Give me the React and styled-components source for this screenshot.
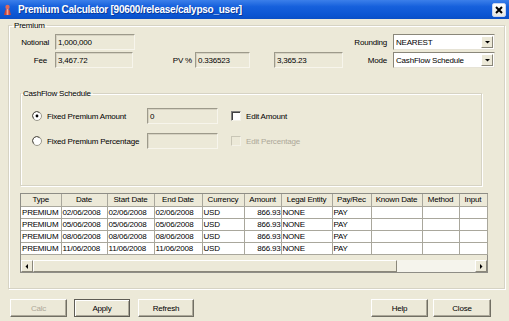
import styled, { createGlobalStyle } from "styled-components";

const columns = [
  { title: "Type", width: 40 },
  { title: "Date", width: 46 },
  { title: "Start Date", width: 47 },
  { title: "End Date", width: 48 },
  { title: "Currency", width: 42 },
  { title: "Amount", width: 37, align: "right" },
  { title: "Legal Entity", width: 51 },
  { title: "Pay/Rec", width: 39 },
  { title: "Known Date", width: 51 },
  { title: "Method", width: 37 },
  { title: "Input", width: 28 },
];

const dates = ["02/06/2008", "05/06/2008", "08/06/2008", "11/06/2008"];
const flows = dates.map((d) => ["PREMIUM", d, d, d, "USD", "866.93", "NONE", "PAY", "", "", ""]);

const GlobalStyle = createGlobalStyle`
  html, body { margin: 0; padding: 0; background: #ECE9D8; }
  body {
    font-family: "Liberation Sans", Arial, sans-serif;
    font-size: 8px;
    letter-spacing: -0.2px;
    color: #000;
  }
  * { box-sizing: border-box; }
`;

const Window = styled.div`
  width: 509px;
  height: 321px;
  background: #ECE9D8;
  display: flex;
  flex-direction: column;
  overflow: hidden;
`;

const TitleBar = styled.div`
  height: 19px;
  flex: none;
  display: flex;
  align-items: center;
  padding: 0 3px 0 3px;
  background: linear-gradient(#3B7FEA, #1660DC 35%, #0B55D2 80%, #0A4FC6);
  color: #fff;
  font-weight: bold;
  font-size: 10px;
  letter-spacing: -0.25px;
`;

const TitleText = styled.span`
  margin-left: 6px;
  flex: 1;
  text-shadow: 1px 1px 0 #0A3A9A;
`;

const CloseBox = styled.div`
  width: 14px;
  height: 14px;
  background: linear-gradient(#FFFFFF, #E6E6E0);
  border: 1px solid #C8D4F0;
  border-radius: 2px;
  display: flex;
  align-items: center;
  justify-content: center;
`;

const Body = styled.div`
  flex: 1;
  padding: 1px 4px 0 8px;
  display: flex;
  flex-direction: column;
`;

const Group = styled.fieldset`
  margin: ${(p) => p.$margin || "0"};
  width: ${(p) => p.$width || "auto"};
  padding: ${(p) => p.$padding || "0"};
  border: 1px solid #D6D3C4;
  box-shadow: inset 1px 1px 0 #FFFFFF, 1px 1px 0 #FFFFFF;
  min-width: 0;
`;

const Legend = styled.legend`
  font-size: 8px;
  line-height: 11px;
  padding: 0 2px;
  margin-left: ${(p) => p.$offset || 0}px;
`;

const TopGrid = styled.div`
  margin: 3px 0 0 0;
  display: grid;
  grid-template-columns: 46px 80px 60px 55px 24px 69px 50px 102px;
  grid-auto-rows: 16px;
  row-gap: 2px;
  align-items: center;
`;

const FieldLabel = styled.span`
  text-align: right;
  padding-right: ${(p) => p.$pad ?? 6}px;
  grid-column: ${(p) => p.$col};
`;

const ReadOnly = styled.div`
  grid-column: ${(p) => p.$col || "auto"};
  height: 16px;
  margin-right: ${(p) => p.$mr || 0}px;
  background: #ECE9D8;
  border: 1px solid;
  border-color: #9D9A8B #F7F5EC #F7F5EC #9D9A8B;
  box-shadow: inset 1px 1px 0 #D6D2C2;
  padding: 0 2px;
  display: flex;
  align-items: center;
`;

const Select = styled.div`
  grid-column: 8;
  height: 16px;
  background: #fff;
  border: 1px solid;
  border-color: #8A877A #E6E3D6 #E6E3D6 #8A877A;
  display: flex;
  align-items: center;
  padding-left: 2px;
`;

const SelectValue = styled.span`
  flex: 1;
`;

const DropButton = styled.div`
  width: 12px;
  height: 12px;
  margin-right: 1px;
  background: #ECE9D8;
  border: 1px solid;
  border-color: #FFFFFF #8A877A #8A877A #FFFFFF;
  display: flex;
  align-items: center;
  justify-content: center;
`;

const OptionGrid = styled.div`
  margin: 9px 0 0 11px;
  display: grid;
  grid-template-columns: 115px 71px 13px auto;
  grid-auto-rows: 16px;
  row-gap: 9px;
  align-items: center;
`;

const Choice = styled.label`
  display: flex;
  align-items: center;
  gap: 5px;
  white-space: nowrap;
  color: ${(p) => (p.$disabled ? "#ACA899" : "#000")};
`;

const CheckBox = styled.span`
  width: 10px;
  height: 10px;
  flex: none;
  background: ${(p) => (p.$disabled ? "#ECE9D8" : "#fff")};
  border: 1px solid;
  border-color: ${(p) =>
    p.$disabled ? "#C9C6B6 #F4F2E8 #F4F2E8 #C9C6B6" : "#808080 #F4F2E8 #F4F2E8 #808080"};
  box-shadow: ${(p) => (p.$disabled ? "none" : "inset 1px 1px 0 #404040")};
`;

const TablePanel = styled.div`
  margin: 7px 0 0 11px;
  width: 468px;
  height: 80px;
  border: 1px solid #8E8D86;
  display: flex;
  flex-direction: column;
`;

const TableArea = styled.div`
  flex: 1;
  background: #ECE9D8;
`;

const Grid = styled.table`
  border-collapse: collapse;
  table-layout: fixed;
  width: 466px;
`;

const HeadCell = styled.th`
  height: 12px;
  padding: 0;
  font-weight: normal;
  text-align: center;
  background: #ECE9D8;
  border-right: 1px solid #A9A79C;
  border-bottom: 1px solid #A9A79C;
  white-space: nowrap;
  overflow: hidden;
  line-height: 11px;
`;

const Cell = styled.td`
  height: 12px;
  padding: 0 0 0 1px;
  background: #fff;
  text-align: ${(p) => p.$align || "left"};
  border-right: 1px solid #A9A79C;
  border-bottom: 1px solid #A9A79C;
  white-space: nowrap;
  overflow: hidden;
  line-height: 11px;
`;

const ScrollBar = styled.div`
  height: 12px;
  flex: none;
  display: flex;
  background: #F5F4EC;
`;

const ScrollArrow = styled.div`
  width: 12px;
  height: 12px;
  background: #ECE9D8;
  border: 1px solid;
  border-color: #FFFFFF #8A877A #8A877A #FFFFFF;
  display: flex;
  align-items: center;
  justify-content: center;
`;

const ScrollThumb = styled.div`
  width: 364px;
  height: 12px;
  background: #ECE9D8;
  border: 1px solid;
  border-color: #FFFFFF #8A877A #8A877A #FFFFFF;
`;

const ScrollTrack = styled.div`
  flex: 1;
`;

const ButtonRow = styled.div`
  margin-top: 10px;
  padding: 0 14px 0 2px;
  display: flex;
  align-items: center;
`;

const Button = styled.div`
  width: ${(p) => p.$w || 56}px;
  height: 18px;
  margin-left: ${(p) => p.$ml || 0}px;
  background: #ECE9D8;
  border: 1px solid;
  border-color: ${(p) => (p.$default ? "#5E5C55" : "#FFFFFF #716F64 #716F64 #FFFFFF")};
  box-shadow: ${(p) =>
    p.$default
      ? "inset 1px 1px 0 #FFFFFF, inset -1px -1px 0 #ACA899"
      : "inset -1px -1px 0 #ACA899"};
  color: ${(p) => (p.$disabled ? "#ACA899" : "#000")};
  display: flex;
  align-items: center;
  justify-content: center;
`;

const Spacer = styled.div`
  flex: 1;
`;

function AppIcon() {
  return (
    <svg width="9" height="12" viewBox="0 0 9 12">
      <ellipse cx="4.5" cy="3" rx="2.2" ry="2.2" fill="#E06A5A" />
      <path d="M1 11 L2.5 5.5 H6.5 L8 11 Z" fill="#C8463A" />
      <rect x="3.6" y="5" width="1.8" height="6" fill="#F3A08E" />
    </svg>
  );
}

function Radio({ checked }) {
  return (
    <svg width="10" height="10" viewBox="0 0 10 10" style={{ flex: "none" }}>
      <circle cx="5" cy="5" r="4.5" fill="#fff" stroke="#9A978A" />
      <path d="M1.8 7.6 A4 4 0 0 1 7.6 1.8" fill="none" stroke="#5A5850" />
      {checked && <circle cx="5" cy="5" r="1.4" fill="#000" />}
    </svg>
  );
}

function Arrow({ dir }) {
  const d = {
    down: "M1 2 H6 L3.5 4.5 Z",
    left: "M4 1 V6 L1.5 3.5 Z",
    right: "M2 1 V6 L4.5 3.5 Z",
  }[dir];
  return (
    <svg width="7" height="7" viewBox="0 0 7 7">
      <path d={d} fill="#000" />
    </svg>
  );
}

export default function App() {
  return (
    <>
      <GlobalStyle />
      <Window>
        <TitleBar>
          <AppIcon />
          <TitleText>Premium Calculator [90600/release/calypso_user]</TitleText>
          <CloseBox>
            <svg width="8" height="8" viewBox="0 0 8 8">
              <path d="M1 1 L7 7 M7 1 L1 7" stroke="#000" strokeWidth="2" />
            </svg>
          </CloseBox>
        </TitleBar>

        <Body>
          <Group $padding="0 0 15px 0">
            <Legend $offset={3}>Premium</Legend>
            <TopGrid>
              <FieldLabel $col={1}>Notional</FieldLabel>
              <ReadOnly $col={2}>1,000,000</ReadOnly>
              <FieldLabel $col={7}>Rounding</FieldLabel>
              <Select>
                <SelectValue>NEAREST</SelectValue>
                <DropButton><Arrow dir="down" /></DropButton>
              </Select>

              <FieldLabel $col={1} $pad={8}>Fee</FieldLabel>
              <ReadOnly $col={2} $mr={2}>3,467.72</ReadOnly>
              <FieldLabel $col={3} $pad={3}>PV %</FieldLabel>
              <ReadOnly $col={4}>0.336523</ReadOnly>
              <ReadOnly $col={6}>3,365.23</ReadOnly>
              <FieldLabel $col={7}>Mode</FieldLabel>
              <Select>
                <SelectValue>CashFlow Schedule</SelectValue>
                <DropButton><Arrow dir="down" /></DropButton>
              </Select>
            </TopGrid>

            <Group $margin="20px 0 0 11px" $width="462px" $padding="0 0 36px 0">
              <Legend>CashFlow Schedule</Legend>
              <OptionGrid>
                <Choice><Radio checked />Fixed Premium Amount</Choice>
                <ReadOnly>0</ReadOnly>
                <span />
                <Choice><CheckBox />Edit Amount</Choice>

                <Choice><Radio />Fixed Premium Percentage</Choice>
                <ReadOnly />
                <span />
                <Choice $disabled><CheckBox $disabled />Edit Percentage</Choice>
              </OptionGrid>
            </Group>

            <TablePanel>
              <TableArea>
                <Grid>
                  <colgroup>
                    {columns.map((c) => (
                      <col key={c.title} style={{ width: c.width }} />
                    ))}
                  </colgroup>
                  <thead>
                    <tr>
                      {columns.map((c) => (
                        <HeadCell key={c.title}>{c.title}</HeadCell>
                      ))}
                    </tr>
                  </thead>
                  <tbody>
                    {flows.map((row, i) => (
                      <tr key={i}>
                        {row.map((v, j) => (
                          <Cell key={j} $align={columns[j].align}>{v}</Cell>
                        ))}
                      </tr>
                    ))}
                  </tbody>
                </Grid>
              </TableArea>
              <ScrollBar>
                <ScrollArrow><Arrow dir="left" /></ScrollArrow>
                <ScrollThumb />
                <ScrollTrack />
                <ScrollArrow><Arrow dir="right" /></ScrollArrow>
              </ScrollBar>
            </TablePanel>
          </Group>

          <ButtonRow>
            <Button $w={57} $disabled>Calc</Button>
            <Button $w={56} $ml={7} $default>Apply</Button>
            <Button $w={56} $ml={8}>Refresh</Button>
            <Spacer />
            <Button $w={57}>Help</Button>
            <Button $w={58} $ml={5}>Close</Button>
          </ButtonRow>
        </Body>
      </Window>
    </>
  );
}
